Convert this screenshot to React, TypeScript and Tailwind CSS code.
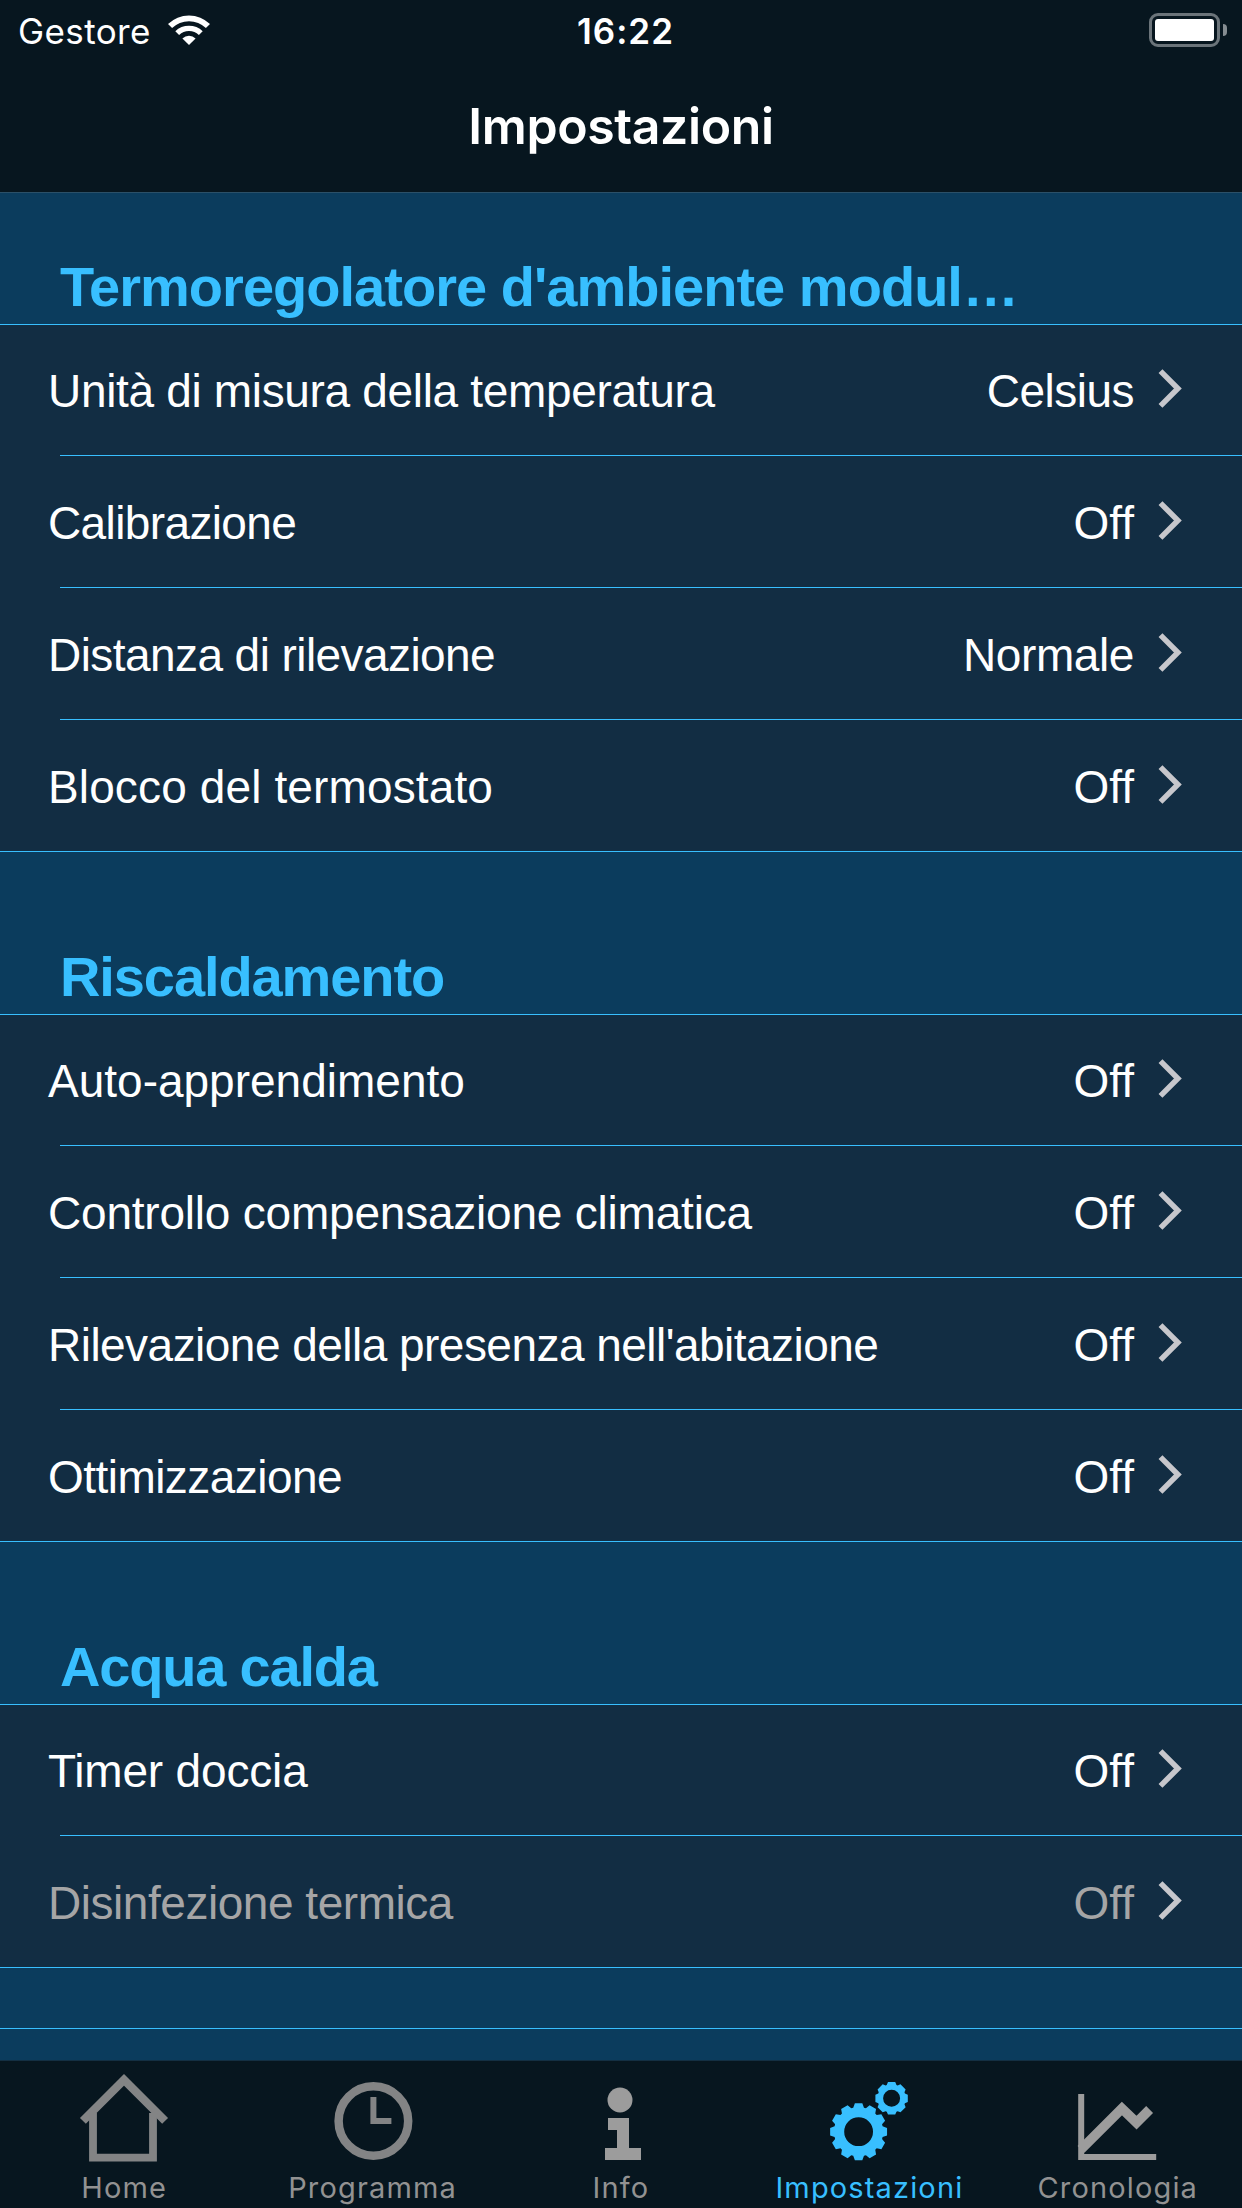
import type { ReactNode } from 'react'

type Setting = {
  label: string
  value: string
  labelClass?: string
  valueClass?: string
  disabled?: boolean
}

type Section = {
  title: string
  titleClass: string
  truncated?: boolean
  rows: Setting[]
}

const sections: Section[] = [
  {
    title: "Termoregolatore d'ambiente modul",
    titleClass: 'h-[131px] tracking-[-0.98px]',
    truncated: true,
    rows: [
      {
        label: 'Unità di misura della temperatura',
        value: 'Celsius',
        labelClass: 'tracking-[-0.33px]',
        valueClass: 'tracking-[-0.5px]',
      },
      { label: 'Calibrazione', value: 'Off', labelClass: 'tracking-[-0.62px]' },
      {
        label: 'Distanza di rilevazione',
        value: 'Normale',
        labelClass: 'tracking-[-0.57px]',
        valueClass: 'tracking-[-0.4px]',
      },
      { label: 'Blocco del termostato', value: 'Off', labelClass: 'tracking-[0.13px]' },
    ],
  },
  {
    title: 'Riscaldamento',
    titleClass: 'h-[162px] tracking-[-1.1px]',
    rows: [
      { label: 'Auto-apprendimento', value: 'Off' },
      { label: 'Controllo compensazione climatica', value: 'Off', labelClass: 'tracking-[-0.21px]' },
      { label: "Rilevazione della presenza nell'abitazione", value: 'Off', labelClass: 'tracking-[-0.53px]' },
      { label: 'Ottimizzazione', value: 'Off', labelClass: 'tracking-[-0.54px]' },
    ],
  },
  {
    title: 'Acqua calda',
    titleClass: 'h-[162px] tracking-[-1.2px]',
    rows: [
      { label: 'Timer doccia', value: 'Off', labelClass: 'tracking-[-0.17px]' },
      { label: 'Disinfezione termica', value: 'Off', labelClass: 'tracking-[-0.46px]', disabled: true },
    ],
  },
]

// Closed outline of a gear, teeth are small trapezoids around the root circle
function gearPath(cx: number, cy: number, teeth: number, outer: number, root: number, tip: number, base: number) {
  const points: string[] = []
  const add = (r: number, a: number) => {
    points.push(`${(cx + r * Math.sin(a)).toFixed(2)} ${(cy - r * Math.cos(a)).toFixed(2)}`)
  }
  for (let i = 0; i < teeth; i++) {
    const a = (i * 2 * Math.PI) / teeth
    add(root, a - base)
    add(outer, a - tip)
    add(outer, a + tip)
    add(root, a + base)
  }
  return `M${points.join('L')}Z`
}

function circlePath(cx: number, cy: number, r: number) {
  return `M${cx - r} ${cy}a${r} ${r} 0 1 0 ${2 * r} 0a${r} ${r} 0 1 0 ${-2 * r} 0Z`
}

function TabIcon({ children }: { children: ReactNode }) {
  return (
    <svg width="96" height="90" viewBox="0 0 96 90" fill="none">
      {children}
    </svg>
  )
}

function HomeIcon() {
  return (
    <TabIcon>
      <path d="M6.9 48.9 48 7.8 89.1 48.9" stroke="#838485" strokeWidth="8.3" />
      <path d="M17 41V85.6H77V41" stroke="#838485" strokeWidth="7.8" />
    </TabIcon>
  )
}

function ClockIcon() {
  return (
    <TabIcon>
      <circle cx="48.4" cy="49" r="34.8" stroke="#838485" strokeWidth="8.5" />
      <path d="M48.4 25V49H66.4" stroke="#838485" strokeWidth="6" />
    </TabIcon>
  )
}

function InfoIcon() {
  return (
    <TabIcon>
      <circle cx="47" cy="28" r="12.5" fill="#9c9c9c" />
      <path d="M35 46H56V76H68V88H32V76H44V58H35Z" fill="#9c9c9c" />
    </TabIcon>
  )
}

function GearsIcon() {
  return (
    <TabIcon>
      <path
        d={gearPath(37.6, 59.7, 12, 28.7, 24.6, 0.13, 0.22) + circlePath(37.6, 59.7, 14.4)}
        fill="#38bfff"
        fillRule="evenodd"
      />
      <path
        d={gearPath(70.6, 26.3, 8, 16.6, 14.2, 0.22, 0.35) + circlePath(70.6, 26.3, 8.5)}
        fill="#38bfff"
        fillRule="evenodd"
      />
    </TabIcon>
  )
}

function ChartIcon() {
  return (
    <TabIcon>
      <path d="M11.2 22V85H86.2" stroke="#9c9c9c" strokeWidth="6" />
      <path d="M11 77.4 51.9 36.5 66.5 50.6 79.6 37.5" stroke="#9c9c9c" strokeWidth="9.7" />
    </TabIcon>
  )
}

const tabs = [
  { label: 'Home', icon: <HomeIcon /> },
  { label: 'Programma', icon: <ClockIcon /> },
  { label: 'Info', icon: <InfoIcon /> },
  { label: 'Impostazioni', icon: <GearsIcon />, active: true },
  { label: 'Cronologia', icon: <ChartIcon /> },
]

function StatusBar() {
  return (
    <div className="grid h-[62px] grid-cols-3 items-center text-[35px] leading-[42px] text-white">
      <div className="flex items-center gap-[17px] pl-[18px]">
        <span className="tracking-[0.4px]">Gestore</span>
        <svg className="mb-[2px]" width="42" height="30" viewBox="0 0 42 30" fill="#fff">
          <path d="M0 9A30 30 0 0 1 42 9L37.9 13.1A24 24 0 0 0 4.1 13.1Z" />
          <path d="M7.3 16.3A19.4 19.4 0 0 1 34.7 16.3L30.9 20.1A14 14 0 0 0 11.1 20.1Z" />
          <path d="M14.4 23.4A9.3 9.3 0 0 1 27.6 23.4L21 30Z" />
        </svg>
      </div>
      <span className="pl-[9px] text-center font-semibold tracking-[1px]">16:22</span>
      <div className="flex items-center justify-end gap-[3px] pr-[15px] pb-[2px]">
        <div className="h-[34px] w-[71px] rounded-[9px] border-[3px] border-[#6b747a] p-[3px]">
          <div className="h-full rounded-[3px] bg-white" />
        </div>
        <div className="h-[12px] w-[4px] rounded-r-full bg-[#858c91]" />
      </div>
    </div>
  )
}

function SettingRow({ label, value, labelClass = '', valueClass = '', disabled }: Setting) {
  return (
    <div
      className={`flex grow items-center pr-[60px] pl-12 text-[46px] leading-[52px] ${
        disabled ? 'text-[#a5a5a6]' : 'text-white'
      }`}
    >
      <span className={`grow pt-[2px] ${labelClass}`}>{label}</span>
      <span className={`mr-6 pt-[2px] ${valueClass}`}>{value}</span>
      <svg className="mb-[3px]" width="24" height="39" viewBox="0 0 24 39" fill="none">
        <path d="M2.5 2.1 19.9 19.5 2.5 36.9" stroke="#c7c7cc" strokeWidth="5.5" />
      </svg>
    </div>
  )
}

export default function App() {
  return (
    <div className="flex h-[2208px] w-[1242px] flex-col overflow-hidden bg-[#0b3c5d] font-['Liberation_Sans',Arial,sans-serif]">
      <header className="h-[193px] shrink-0 border-b border-[#2b5068] bg-[#07161f] font-[Inter,sans-serif]">
        <StatusBar />
        <h1 className="pt-[34px] text-center text-[50px] leading-[60px] font-semibold tracking-[-0.4px] text-white">
          Impostazioni
        </h1>
      </header>

      <main className="grow overflow-hidden">
        {sections.map((section) => (
          <section key={section.title}>
            <h2
              className={`flex items-end pb-[5px] pl-[60px] text-[56px] leading-[64px] font-bold text-[#38bfff] ${section.titleClass}`}
            >
              {section.title}
              {section.truncated && <span className="pl-[3px] tracking-[2.4px]">...</span>}
            </h2>
            <div className="border-y border-[#38bfff] bg-[#122d43]">
              {section.rows.map((row, i) => (
                <div key={row.label}>
                  {i > 0 && <div className="ml-[60px] h-px bg-[#38bfff]" />}
                  <div className={`flex ${i === 0 ? 'h-[130px]' : 'h-[131px]'}`}>
                    <SettingRow {...row} />
                  </div>
                </div>
              ))}
            </div>
          </section>
        ))}
        <div className="mt-[60px] h-px bg-[#38bfff]" />
      </main>

      <nav className="grid h-[148px] shrink-0 grid-cols-5 border-t border-[#142f42] bg-[#07161f] font-[Inter,sans-serif]">
        {tabs.map((tab) => (
          <div key={tab.label} className="flex flex-col items-center pt-[11px]">
            {tab.icon}
            <span
              className={`mt-2 text-[29px] leading-9 tracking-[1.15px] ${
                tab.active ? 'text-[#38bfff]' : 'text-[#929292]'
              }`}
            >
              {tab.label}
            </span>
          </div>
        ))}
      </nav>
    </div>
  )
}
